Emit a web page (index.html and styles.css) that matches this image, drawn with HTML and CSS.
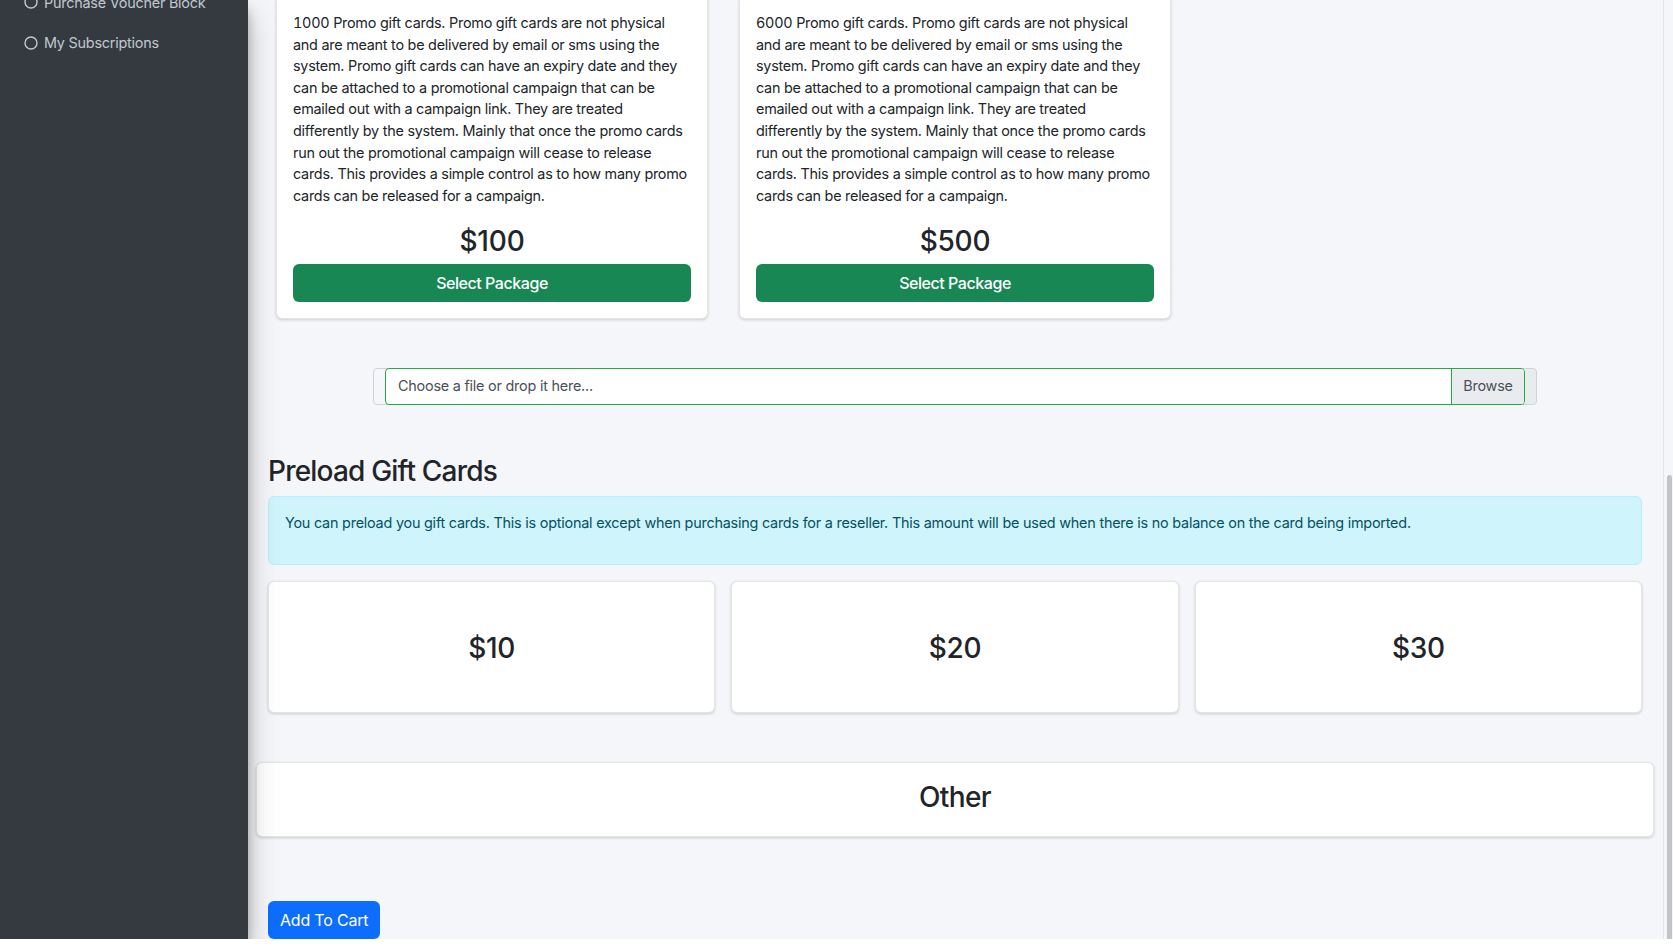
FILE: index.html
```html
<!DOCTYPE html>
<html lang="en">
<head>
<meta charset="utf-8">
<title>Purchase Gift Cards</title>
<link rel="stylesheet" href="styles.css">
</head>
<body>
<div class="app">
  <aside class="sidebar">
    <nav class="nav">
      <a class="nav-link" href="#"><svg class="nav-icon" viewBox="0 0 14 14" width="14" height="14"><circle cx="7" cy="7" r="6" fill="none" stroke="currentColor" stroke-width="1.4"/></svg><span>Purchase Voucher Block</span></a>
      <a class="nav-link" href="#"><svg class="nav-icon" viewBox="0 0 14 14" width="14" height="14"><circle cx="7" cy="7" r="6" fill="none" stroke="currentColor" stroke-width="1.4"/></svg><span>My Subscriptions</span></a>
    </nav>
  </aside>
  <main class="main">
    <div class="pkg-row">
      <div class="card pkg-card">
        <div class="card-body">
          <p class="pkg-text"><span class="num">1000</span> Promo gift cards. Promo gift cards are not physical and are meant to be delivered by email or sms using the system. Promo gift cards can have an expiry date and they can be attached to a promotional campaign that can be emailed out with a campaign link. They are treated differently by the system. Mainly that once the promo cards run out the promotional campaign will cease to release cards. This provides a simple control as to how many promo cards can be released for a campaign.</p>
          <h3 class="price">$100</h3>
          <button class="btn btn-success">Select Package</button>
        </div>
      </div>
      <div class="card pkg-card">
        <div class="card-body">
          <p class="pkg-text"><span class="num">6000</span> Promo gift cards. Promo gift cards are not physical and are meant to be delivered by email or sms using the system. Promo gift cards can have an expiry date and they can be attached to a promotional campaign that can be emailed out with a campaign link. They are treated differently by the system. Mainly that once the promo cards run out the promotional campaign will cease to release cards. This provides a simple control as to how many promo cards can be released for a campaign.</p>
          <h3 class="price">$500</h3>
          <button class="btn btn-success">Select Package</button>
        </div>
      </div>
    </div>

    <div class="file-wrap">
      <div class="file-field">
        <label class="file-label">
          <span class="file-text">Choose a file or drop it here...</span>
          <span class="browse">Browse</span>
        </label>
      </div>
    </div>

    <h3 class="section-title">Preload Gift Cards</h3>
    <div class="alert">
      <p>You can preload you gift cards. This is optional except when purchasing cards for a reseller. This amount will be used when there is no balance on the card being imported.</p>
    </div>

    <div class="amount-grid">
      <div class="card amount-card"><h3 class="amount">$10</h3></div>
      <div class="card amount-card"><h3 class="amount">$20</h3></div>
      <div class="card amount-card"><h3 class="amount">$30</h3></div>
    </div>

    <div class="card other-card">
      <h3 class="other">Other</h3>
    </div>

    <button class="btn btn-primary">Add To Cart</button>
  </main>
  <div class="scrollbar"><div class="thumb"></div></div>
</div>
</body>
</html>
```

FILE: styles.css
```css
* { box-sizing: border-box; }

html, body {
  margin: 0;
  height: 100%;
}

body {
  font-family: Inter, "Noto Sans", "Liberation Sans", sans-serif;
  color: #212529;
  background: #ffffff;
  overflow: hidden;
  letter-spacing: -0.22px;
}

.app {
  display: flex;
  height: 939px;
  overflow: hidden;
}

/* Sidebar */
.sidebar {
  width: 248px;
  flex: none;
  background: #343a40;
  position: relative;
  z-index: 2;
  box-shadow: 0 14px 28px rgba(0, 0, 0, .25), 0 10px 10px rgba(0, 0, 0, .22);
}

.nav {
  margin-top: -18px;
  padding: 0 8px;
}

.nav-link {
  display: flex;
  align-items: center;
  gap: 6px;
  height: 40.6px;
  padding: 0 16px;
  color: #c2c7d0;
  font-size: 14.4px;
  text-decoration: none;
}

.nav-icon { flex: none; }

/* Main */
.main {
  flex: 1;
  min-width: 0;
  background: #f4f6f9;
  padding: 0 21px 0 20px;
}

.card {
  background: #ffffff;
  border: 1px solid rgba(0, 0, 0, .1);
  border-radius: 6px;
  box-shadow: 0 1px 3px rgba(0, 0, 0, .18);
}

.pkg-row {
  display: flex;
  gap: 31px;
  margin: -5px 0 0 8px;
}

.pkg-card { width: 432px; }

.card-body { padding: 16px; }

.pkg-text {
  margin: 0 0 16px;
  font-size: 14.4px;
  line-height: 21.6px;
  letter-spacing: -0.25px;
}

.num { font-variant-numeric: tabular-nums; }

.price {
  margin: 0 0 5px;
  padding-top: 3px;
  font-size: 28px;
  font-weight: 500;
  line-height: 1.2;
  text-align: center;
  letter-spacing: -0.2px;
}

.btn {
  display: inline-block;
  border: none;
  border-radius: 6px;
  font-family: inherit;
  font-size: 16px;
  line-height: 24px;
  padding: 7px 12px;
  color: #ffffff;
  cursor: pointer;
  letter-spacing: -0.2px;
}

.btn-success {
  display: block;
  width: 100%;
  background: #198754;
  font-weight: 500;
  letter-spacing: -0.45px;
}

.btn-primary {
  margin-top: 64px;
  background: #0d6efd;
}

/* File input */
.file-wrap {
  margin: 49px 105px 0;
}

.file-field {
  display: flex;
  height: 37px;
  border: 1px solid #ced4da;
  border-radius: 4px;
  padding: 0 11px;
  background: linear-gradient(to right, transparent calc(100% - 11px), #e9ecef calc(100% - 11px));
}

.file-label {
  flex: 1;
  display: flex;
  margin: -1px 0;
  border: 1px solid #28a745;
  border-radius: 4px;
  background: #ffffff;
  overflow: hidden;
  font-size: 14.4px;
  color: #495057;
}

.file-text {
  flex: 1;
  display: flex;
  align-items: center;
  padding-left: 12px;
  padding-bottom: 1px;
}

.browse {
  width: 73px;
  display: flex;
  align-items: center;
  justify-content: center;
  padding-bottom: 1px;
  background: #e9ecef;
  border-left: 1px solid #28a745;
}

/* Preload */
.section-title {
  margin: 49px 0 7px;
  padding-top: 1px;
  font-size: 28px;
  font-weight: 500;
  line-height: 1.2;
  letter-spacing: -0.8px;
}

.alert {
  background: #cff4fc;
  border: 1px solid #b6effb;
  border-radius: 6px;
  color: #055160;
  padding: 15px 16px;
  margin-bottom: 16px;
}

.alert p {
  margin: 0 0 16px;
  font-size: 14.4px;
  line-height: 21.6px;
}

.amount-grid {
  display: grid;
  grid-template-columns: repeat(3, 1fr);
  gap: 16px;
}

.amount-card {
  padding: 50px 16px 46px;
}

.amount, .other {
  margin: 0;
  font-size: 28px;
  font-weight: 500;
  line-height: 1.2;
  text-align: center;
  letter-spacing: -0.3px;
}

.other-card {
  margin: 49px -12px 0;
  padding: 18px 16px 14px;
}

.other {
  margin-bottom: 8px;
  letter-spacing: -0.6px;
}

/* Scrollbar */
.scrollbar {
  width: 10px;
  flex: none;
  background: #f4f6f9;
  border-left: 1px solid #e3e4e6;
  display: flex;
  flex-direction: column;
  justify-content: flex-end;
  padding: 0 1px 0 3px;
}

.thumb {
  height: 464px;
  background: #c4c4c4;
  border-radius: 4px 4px 0 0;
}
```
